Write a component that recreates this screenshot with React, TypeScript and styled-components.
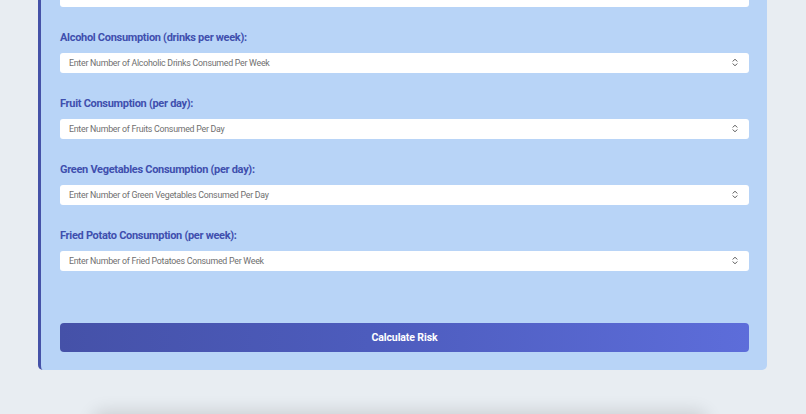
import React from 'react';
import styled, { createGlobalStyle } from 'styled-components';

const GlobalStyle = createGlobalStyle`
  * { box-sizing: border-box; }
  html, body {
    margin: 0;
    padding: 0;
    background: #e8edf2;
    font-family: Roboto, "Liberation Sans", Arial, sans-serif;
    overflow: hidden;
  }
`;

interface field {
  name: string,
  label: string,
  placeholder?: string
}

// the form is scrolled: only the bottom of the first field is in view
const fields: field[] = [
  { name: 'smoking', label: 'Smoking History (cigarettes per day):' },
  { name: 'alcohol', label: 'Alcohol Consumption (drinks per week):', placeholder: 'Enter Number of Alcoholic Drinks Consumed Per Week' },
  { name: 'fruit', label: 'Fruit Consumption (per day):', placeholder: 'Enter Number of Fruits Consumed Per Day' },
  { name: 'greens', label: 'Green Vegetables Consumption (per day):', placeholder: 'Enter Number of Green Vegetables Consumed Per Day' },
  { name: 'potato', label: 'Fried Potato Consumption (per week):', placeholder: 'Enter Number of Fried Potatoes Consumed Per Week' },
];

const Spinner = () => (
  <svg width="6" height="9" viewBox="0 0 6 9" fill="none" stroke="#555" strokeWidth="1" strokeLinecap="round" strokeLinejoin="round">
    <path d="M1 3.2 L3 1.2 L5 3.2" />
    <path d="M1 5.8 L3 7.8 L5 5.8" />
  </svg>
);

const App = () => {
  return (
    <>
      <GlobalStyle />
      <Page>
        <Form onSubmit={(e) => e.preventDefault()}>
          {fields.map((f) => (
            <Group key={f.name}>
              <Label htmlFor={f.name}>{f.label}</Label>
              <InputWrap>
                <Input id={f.name} name={f.name} type="number" placeholder={f.placeholder} />
                <SpinIcon><Spinner /></SpinIcon>
              </InputWrap>
            </Group>
          ))}
          <Submit type="submit">Calculate Risk</Submit>
        </Form>
        <Results />
      </Page>
    </>
  );
};

const Page = styled.div`
  display: flex;
  flex-direction: column;
  align-items: flex-start;
  padding: 0 0 0 38px;
`;

const Form = styled.form`
  width: 729px;
  margin-top: -55px;
  display: flex;
  flex-direction: column;
  background: #b8d4f7;
  border-left: 3px solid #4552a8;
  border-radius: 5px;
  padding: 18px 18px 18px 19px;
`;

const Group = styled.div`
  display: flex;
  flex-direction: column;
  margin-bottom: 22px;
`;

const Label = styled.label`
  font-size: 11px;
  line-height: 18px;
  letter-spacing: -0.3px;
  font-weight: 700;
  color: #3f4fae;
  margin-bottom: 6px;
`;

const InputWrap = styled.div`
  position: relative;
`;

const Input = styled.input`
  display: block;
  width: 100%;
  height: 20px;
  border: none;
  border-radius: 3px;
  background: #fff;
  padding: 0 9px;
  font-family: Roboto, "Liberation Sans", Arial, sans-serif;
  font-size: 8.8px;
  letter-spacing: -0.25px;
  color: #333;
  outline: none;
  -moz-appearance: textfield;

  &::placeholder {
    color: #6f6f6f;
  }

  &::-webkit-outer-spin-button,
  &::-webkit-inner-spin-button {
    -webkit-appearance: none;
    margin: 0;
  }
`;

const SpinIcon = styled.span`
  position: absolute;
  right: 11px;
  top: 5px;
  display: flex;
  pointer-events: none;
`;

const Submit = styled.button`
  margin-top: 30px;
  height: 29px;
  border: none;
  border-radius: 4px;
  background: linear-gradient(90deg, #4551a8 0%, #4d5cbd 45%, #5d6dda 100%);
  color: #fff;
  font-family: Roboto, "Liberation Sans", Arial, sans-serif;
  font-size: 10.5px;
  letter-spacing: -0.1px;
  font-weight: 700;
  cursor: pointer;
`;

const Results = styled.div`
  width: 612px;
  height: 200px;
  margin-top: 46px;
  margin-left: 56px;
  border-radius: 8px;
  background: #e8edf2;
  box-shadow: 0 -4px 18px rgba(0, 0, 0, 0.14);
`;

export default App;
